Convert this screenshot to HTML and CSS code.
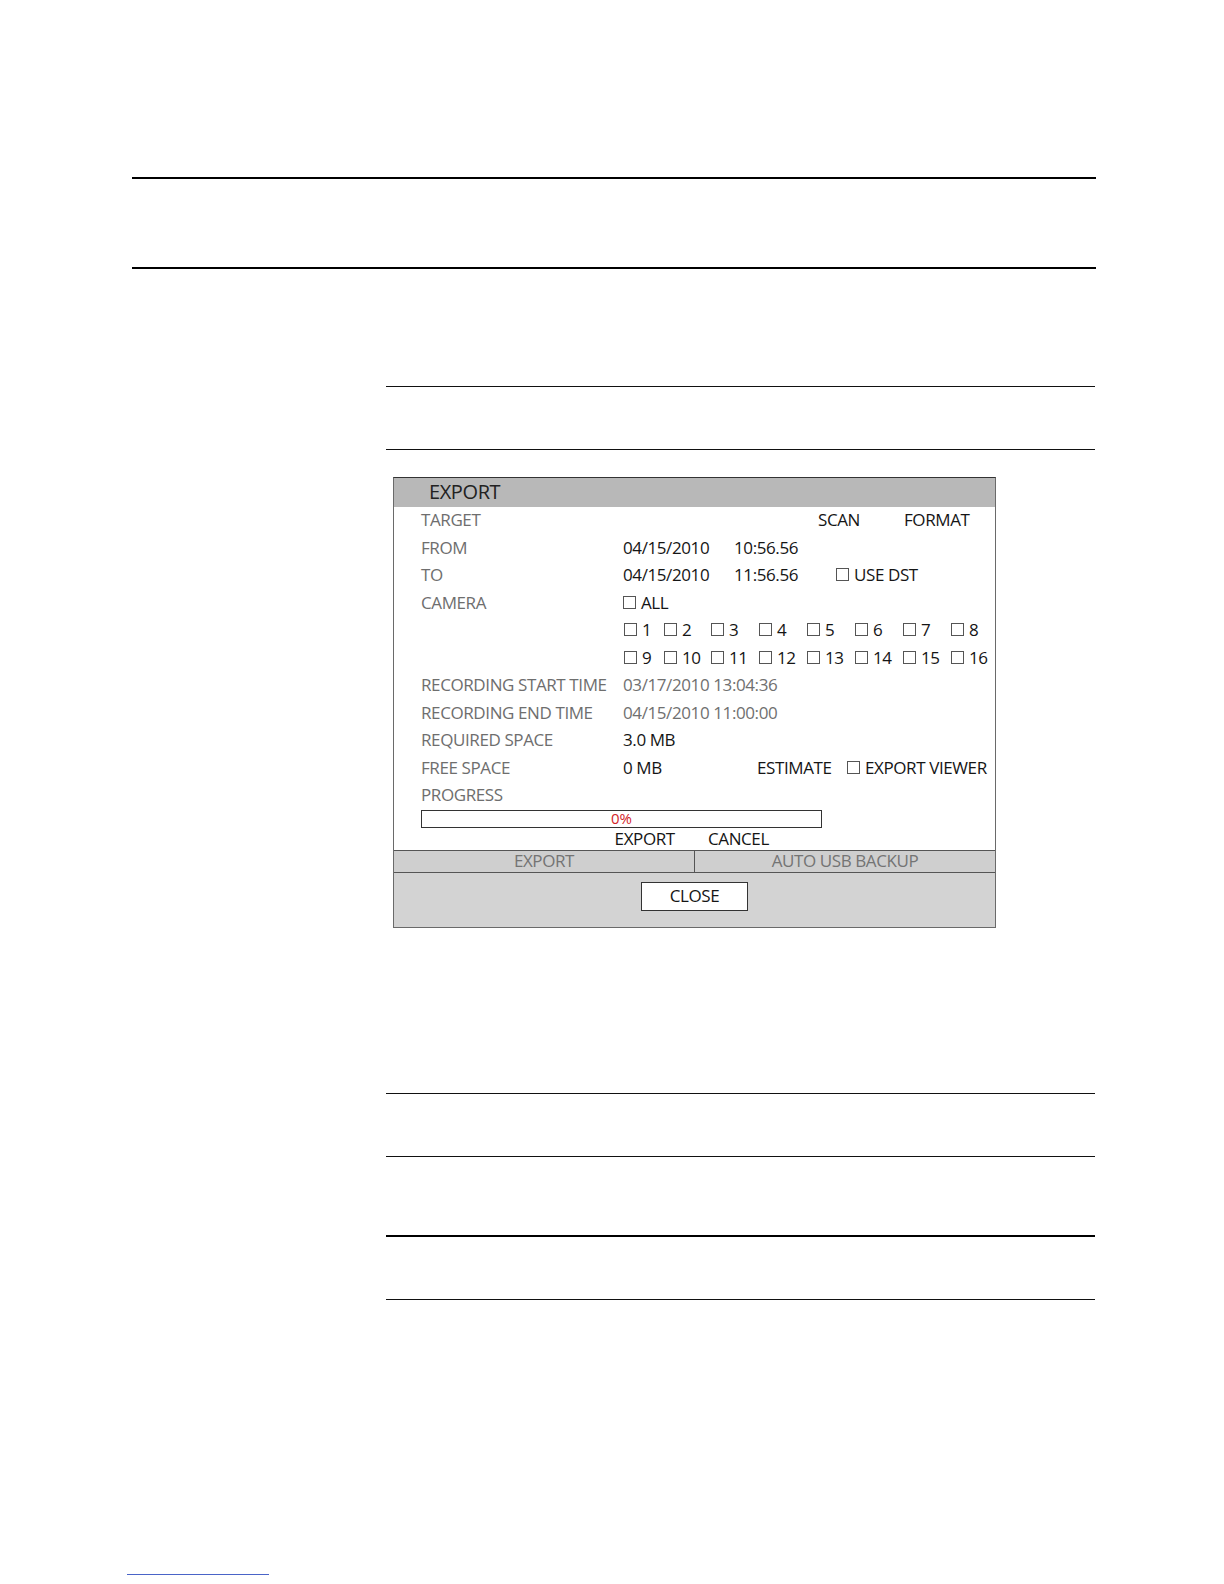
FILE: index.html
```html
<!DOCTYPE html>
<html>
<head>
<meta charset="utf-8">
<link rel="stylesheet" href="styles.css">
</head>
<body>
<div class="page">
  <div class="rule thick wide"></div>
  <div class="rule thick wide second"></div>

  <div class="section s1">
    <div class="rule thin"></div>
    <div class="rule thin gap62"></div>
  </div>

  <div class="dialog">
    <div class="dlg-title">EXPORT</div>
    <div class="dlg-body">
      <div class="row">
        <div class="label">TARGET</div>
        <div class="val"><span class="w-target"></span><span class="w-scan">SCAN</span><span>FORMAT</span></div>
      </div>
      <div class="row">
        <div class="label">FROM</div>
        <div class="val"><span class="w-date">04/15/2010</span><span>10:56.56</span></div>
      </div>
      <div class="row">
        <div class="label">TO</div>
        <div class="val"><span class="w-date">04/15/2010</span><span class="w-time">11:56.56</span><span><i class="box"></i>USE DST</span></div>
      </div>
      <div class="row">
        <div class="label">CAMERA</div>
        <div class="val"><span><i class="box"></i>ALL</span></div>
      </div>
      <div class="row">
        <div class="label"></div>
        <div class="val cams">
          <span><i class="box"></i>1</span><span><i class="box"></i>2</span><span><i class="box"></i>3</span><span><i class="box"></i>4</span>
          <span><i class="box"></i>5</span><span><i class="box"></i>6</span><span><i class="box"></i>7</span><span><i class="box"></i>8</span>
        </div>
      </div>
      <div class="row">
        <div class="label"></div>
        <div class="val cams">
          <span><i class="box"></i>9</span><span><i class="box"></i>10</span><span><i class="box"></i>11</span><span><i class="box"></i>12</span>
          <span><i class="box"></i>13</span><span><i class="box"></i>14</span><span><i class="box"></i>15</span><span><i class="box"></i>16</span>
        </div>
      </div>
      <div class="row">
        <div class="label">RECORDING START TIME</div>
        <div class="val dim">03/17/2010 13:04:36</div>
      </div>
      <div class="row">
        <div class="label">RECORDING END TIME</div>
        <div class="val dim">04/15/2010 11:00:00</div>
      </div>
      <div class="row">
        <div class="label">REQUIRED SPACE</div>
        <div class="val">3.0 MB</div>
      </div>
      <div class="row">
        <div class="label">FREE SPACE</div>
        <div class="val"><span class="w-free">0 MB</span><span class="w-est">ESTIMATE</span><span><i class="box"></i>EXPORT VIEWER</span></div>
      </div>
      <div class="row">
        <div class="label">PROGRESS</div>
        <div class="val"></div>
      </div>
      <div class="progress"><span>0%</span></div>
      <div class="actions"><span class="w-export">EXPORT</span><span>CANCEL</span></div>
    </div>
    <div class="tabs">
      <div class="tab">EXPORT</div>
      <div class="tab">AUTO USB BACKUP</div>
    </div>
    <div class="footer">
      <div class="close-btn">CLOSE</div>
    </div>
  </div>

  <div class="section s2">
    <div class="rule thin"></div>
    <div class="rule thin gap62"></div>
    <div class="rule thick gap78"></div>
    <div class="rule thin gap62"></div>
  </div>

  <div class="link-line"></div>
</div>
</body>
</html>
```

FILE: styles.css
```css
html, body {
  margin: 0;
  padding: 0;
  background: #ffffff;
}

.page {
  position: relative;
  width: 1224px;
  height: 1584px;
  padding-top: 177px;
  box-sizing: border-box;
  font-family: "Open Sans", "Noto Sans", sans-serif;
}

.rule {
  background: #000;
}

.rule.thick {
  height: 2px;
}

.rule.thin {
  height: 1px;
  background: #111;
}

.rule.wide {
  margin-left: 132px;
  width: 964px;
}

.rule.second {
  margin-top: 88px;
}

.section {
  margin-left: 386px;
  width: 709px;
}

.section.s1 {
  margin-top: 117px;
}

.section.s2 {
  margin-top: 165px;
}

.gap62 {
  margin-top: 62px;
}

.gap78 {
  margin-top: 78px;
}

/* dialog */
.dialog {
  margin-top: 27px;
  margin-left: 393px;
  width: 603px;
  box-sizing: border-box;
  border: 1px solid #6a6a6a;
  border-top-color: #333;
  background: #fff;
  font-size: 17px;
  letter-spacing: -0.4px;
}

.dlg-title {
  height: 29px;
  line-height: 27px;
  background: #b8b8b8;
  color: #222;
  font-size: 20px;
  padding-left: 35px;
}

.dlg-body {
  padding-left: 27px;
}

.row {
  display: flex;
  height: 27.5px;
  line-height: 26px;
  white-space: nowrap;
}

.label {
  width: 202px;
  flex: none;
  color: #6e6e6e;
}

.val {
  display: flex;
  color: #151515;
}

.val.dim {
  color: #707070;
}

.w-target { width: 195px; }
.w-scan { width: 86px; }
.w-date { width: 111px; }
.w-time { width: 102px; }
.w-free { width: 134px; }
.w-est { width: 90px; }

.cams {
  display: grid;
  grid-template-columns: 40px 47px 48px 48px 48px 48px 48px auto;
  padding-left: 1px;
}

.box {
  display: inline-block;
  width: 11px;
  height: 11px;
  border: 1px solid #555;
  margin-right: 5px;
  vertical-align: baseline;
}

.progress {
  width: 401px;
  height: 18px;
  box-sizing: border-box;
  border: 1px solid #333;
  text-align: center;
  font-size: 15px;
  line-height: 14px;
  color: #d2232a;
  letter-spacing: 0;
}

.actions {
  display: flex;
  height: 22.5px;
  line-height: 22px;
  padding-left: 193.6px;
  color: #151515;
}

.w-export { width: 93.4px; }

.tabs {
  display: flex;
  border-top: 1px solid #555;
  border-bottom: 1px solid #555;
  background: #cfcfcf;
}

.tab {
  flex: 1;
  height: 21px;
  line-height: 20px;
  text-align: center;
  color: #747474;
}

.tab + .tab {
  border-left: 1px solid #555;
}

.footer {
  height: 54px;
  background: #d3d3d3;
  padding-top: 9px;
  box-sizing: border-box;
}

.close-btn {
  width: 107px;
  height: 29px;
  box-sizing: border-box;
  margin: 0 auto;
  border: 1px solid #333;
  background: #fff;
  text-align: center;
  line-height: 26px;
  color: #151515;
}

.link-line {
  position: absolute;
  left: 127px;
  top: 1574px;
  width: 142px;
  height: 1px;
  background: #4a64c8;
}
```
